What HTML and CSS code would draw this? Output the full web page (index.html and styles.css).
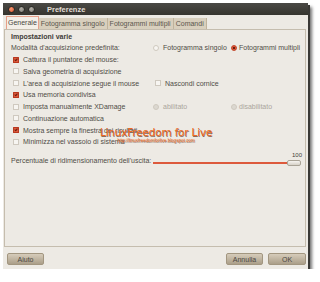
FILE: index.html
```html
<!DOCTYPE html>
<html lang="it">
<head>
  <meta charset="UTF-8" />
  <title>Preferenze</title>
  <link rel="stylesheet" href="styles.css">
</head>
<body>
  <div class="window">
    <div class="titlebar">
      <span class="wbtn close"></span>
      <span class="wbtn"></span>
      <span class="wbtn"></span>
      <span class="title">Preferenze</span>
    </div>

    <div class="content">
      <div class="tabs">
        <span class="tab active">Generale</span>
        <span class="tab">Fotogramma singolo</span>
        <span class="tab">Fotogrammi multipli</span>
        <span class="tab">Comandi</span>
      </div>

      <div class="panel">
        <div class="section-title">Impostazioni varie</div>

        <div class="rows">
          <div class="cell">Modalità d'acquisizione predefinita:</div>
          <div class="cell"><span class="radio"></span>Fotogramma singolo</div>
          <div class="cell second"><span class="radio on"></span>Fotogrammi multipli</div>

          <div class="cell wide"><span class="check on"></span>Cattura il puntatore del mouse:</div>

          <div class="cell wide"><span class="check"></span>Salva geometria di acquisizione</div>

          <div class="cell"><span class="check"></span>L'area di acquisizione segue il mouse</div>
          <div class="cell span2"><span class="check"></span>Nascondi cornice</div>

          <div class="cell wide"><span class="check on"></span>Usa memoria condivisa</div>

          <div class="cell"><span class="check"></span>Imposta manualmente XDamage</div>
          <div class="cell off"><span class="radio dim"></span>abilitato</div>
          <div class="cell second off"><span class="radio dim"></span>disabilitato</div>

          <div class="cell wide"><span class="check"></span>Continuazione automatica</div>

          <div class="cell wide"><span class="check on"></span>Mostra sempre la finestra dei risultati</div>

          <div class="cell wide"><span class="check"></span>Minimizza nel vassoio di sistema</div>
        </div>

        <div class="scale-row">
          <div class="scale-label">Percentuale di ridimensionamento dell'uscita:</div>
          <div class="scale">
            <div class="scale-value">100</div>
            <div class="trough"><span class="fill"></span><span class="handle"></span></div>
          </div>
        </div>

        <div class="watermark">
          <div class="wm-title">LinuxFreedom for Live</div>
          <div class="wm-url">http://linuxfreedomforlive.blogspot.com</div>
        </div>
      </div>

      <div class="actions">
        <button class="btn">Aiuto</button>
        <span class="spacer"></span>
        <button class="btn">Annulla</button>
        <button class="btn ok">OK</button>
      </div>
    </div>
  </div>
</body>
</html>
```

FILE: styles.css
```css
body {
  margin: 0;
  background: #ffffff;
  font-family: 'Liberation Sans', Arial, sans-serif;
  font-size: 7px;
  color: #4f4c46;
}

.window {
  margin: 3px 0 0 3px;
  width: 305px;
  height: 266px;
  background: #edeae4;
  box-shadow: 2px 2px 0 #3a3936, 4px 4px 3px rgba(0, 0, 0, 0.55);
  display: flex;
  flex-direction: column;
}

.titlebar {
  height: 12px;
  background: linear-gradient(#4a4945, #36352f);
  display: flex;
  align-items: center;
  padding-left: 5px;
  gap: 3px;
}

.wbtn {
  width: 5px;
  height: 5px;
  border-radius: 50%;
  background: radial-gradient(circle at 40% 35%, #b1aea6, #7b7870);
  border: 0.5px solid #2b2a27;
}

.wbtn.close {
  background: radial-gradient(circle at 40% 35%, #f59a73, #d9512b);
}

.title {
  margin-left: 9px;
  font-weight: bold;
  font-size: 7.5px;
  color: #e2ded6;
}

.content {
  flex: 1;
  display: flex;
  flex-direction: column;
  padding: 1px 2px 4px 1px;
}

.tabs {
  height: 13px;
  display: flex;
  align-items: flex-end;
  padding-left: 2px;
}

.tab {
  height: 11px;
  line-height: 11px;
  padding: 0 2px;
  background: #d8cfbd;
  border-right: 1px solid #bfb39c;
  color: #5a564d;
  white-space: nowrap;
}

.tab.active {
  height: 12px;
  line-height: 12px;
  background: #f3efe8;
  border: 1px solid #e7a08a;
  border-bottom: none;
  padding: 0 1px;
  color: #4a4843;
}

.panel {
  position: relative;
  height: 218px;
  border: 1px solid #c5bdae;
  box-sizing: border-box;
  padding: 1px 0 0 6px;
}

.section-title {
  height: 11px;
  line-height: 11px;
  font-weight: bold;
  color: #3f3d38;
}

.rows {
  display: grid;
  grid-template-columns: 142px 78px 70px;
  grid-auto-rows: 11.75px;
}

.cell {
  display: flex;
  align-items: center;
  white-space: nowrap;
}

.cell.wide {
  grid-column: 1 / 4;
}

.cell.span2 {
  grid-column: 2 / 4;
}

.cell.off {
  color: #aaa59c;
}

.check,
.radio {
  position: relative;
  width: 4px;
  height: 4px;
  margin: 0 4px 0 2px;
  border: 0.5px solid #cfc9bf;
  background: #f7f5f1;
  flex-shrink: 0;
}

.cell .radio {
  margin-left: 0;
  margin-right: 4px;
  border-radius: 50%;
}

.cell.second .radio {
  margin-right: 2px;
}

.check.on {
  background: #dc5a3c;
  border-color: #b8381f;
  border-radius: 0.5px;
}

.check.on::after {
  content: "";
  position: absolute;
  left: 1.2px;
  top: 0.2px;
  width: 1px;
  height: 2.2px;
  border: solid #6b1c0e;
  border-width: 0 0.8px 0.8px 0;
  transform: rotate(40deg);
}

.radio.on {
  background: radial-gradient(circle, #6a2010 0 0.8px, #e0583a 1.2px);
  border-color: #c24428;
}

.radio.dim {
  background: #dcd8d0;
}

.scale-row {
  display: flex;
  margin-top: 4px;
}

.scale-label {
  width: 142px;
  padding-top: 5px;
  white-space: nowrap;
}

.scale {
  width: 150px;
}

.scale-value {
  height: 7px;
  line-height: 7px;
  text-align: right;
  font-size: 6px;
  padding-right: 1px;
  color: #3f3d38;
}

.trough {
  height: 8px;
  display: flex;
  align-items: center;
}

.fill {
  width: 134px;
  height: 2px;
  background: #dd5a3c;
}

.handle {
  width: 12px;
  height: 4px;
  border-radius: 2px;
  border: 0.5px solid #a9a396;
  background: linear-gradient(#f6f4f0, #d6d1c7);
}

.watermark {
  position: absolute;
  left: 95px;
  top: 97px;
  text-align: center;
  color: #ee6a24;
  text-shadow: 0.5px 0.5px 0 #8a6c5c;
}

.wm-title {
  font-family: 'DejaVu Sans', sans-serif;
  font-size: 10.5px;
  line-height: 11px;
  letter-spacing: -0.2px;
}

.wm-url {
  font-size: 4.5px;
  line-height: 5px;
}

.actions {
  display: flex;
  gap: 5px;
  margin-top: 6px;
  padding-left: 3px;
}

.spacer {
  flex: 1;
}

.btn {
  height: 12px;
  width: 37px;
  padding: 0;
  border: 1px solid #a29680;
  border-radius: 2px;
  background: linear-gradient(#d6ccba, #ab9f89);
  font-family: 'Liberation Sans', Arial, sans-serif;
  font-size: 7px;
  color: #4a4640;
}

.btn.ok {
  width: 38px;
}
```
